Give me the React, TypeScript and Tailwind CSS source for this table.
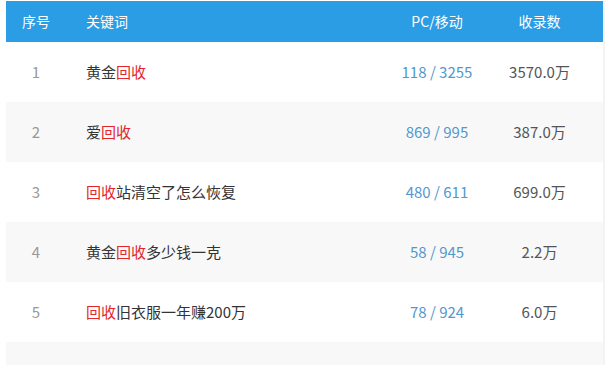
const rows = [
  { id: 1, parts: [["黄金", false], ["回收", true]], pc: "118 / 3255", count: "3570.0万" },
  { id: 2, parts: [["爱", false], ["回收", true]], pc: "869 / 995", count: "387.0万" },
  { id: 3, parts: [["回收", true], ["站清空了怎么恢复", false]], pc: "480 / 611", count: "699.0万" },
  { id: 4, parts: [["黄金", false], ["回收", true], ["多少钱一克", false]], pc: "58 / 945", count: "2.2万" },
  { id: 5, parts: [["回收", true], ["旧衣服一年赚200万", false]], pc: "78 / 924", count: "6.0万" },
  { id: 6, parts: [], pc: "", count: "" },
] as { id: number; parts: [string, boolean][]; pc: string; count: string }[];

export default function App() {
  return (
    <div
      className="h-[365px] w-[611px] overflow-hidden bg-white pl-[6px] pt-px"
      style={{ fontFamily: '"Noto Sans CJK SC", "Liberation Sans", sans-serif' }}
    >
      <div className="w-[599px] border-r-2 border-[#f3f3f3]">
        {/* Header */}
        <div className="flex h-[41px] w-[597px] items-center bg-[#2b9de5] text-[14px] text-white">
          <div className="w-[60px] text-center">序号</div>
          <div className="flex-1 pl-[20px]">关键词</div>
          <div className="w-[78px] text-center">PC/移动</div>
          <div className="w-[127px] text-center">收录数</div>
        </div>

        {/* Rows */}
        {rows.map((r, i) => (
          <div
            key={r.id}
            className={`flex h-[60px] w-[597px] items-center text-[15px] ${i % 2 === 1 ? "bg-[#f8f8f8]" : "bg-white"}`}
          >
            <div className="w-[60px] text-center text-[#999]">{r.parts.length ? r.id : ""}</div>
            <div className="flex-1 pl-[20px] text-[#333]">
              {r.parts.map(([t, hot], j) => (
                <span key={j} className={hot ? "text-[#e3262c]" : ""}>
                  {t}
                </span>
              ))}
            </div>
            <div className="w-[78px] whitespace-nowrap text-center text-[#5198cf]">{r.pc}</div>
            <div className="w-[127px] text-center text-[#555]">{r.count}</div>
          </div>
        ))}
      </div>
    </div>
  );
}
